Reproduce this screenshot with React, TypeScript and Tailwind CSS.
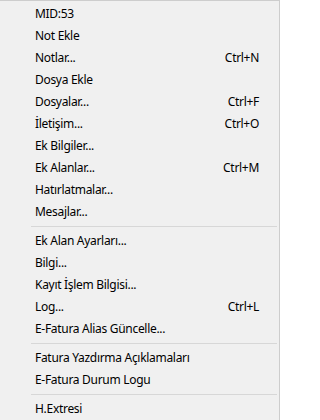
import React from 'react';

type Entry = { label: string; shortcut?: string } | 'sep';

const entries: Entry[] = [
  { label: 'MID:53' },
  { label: 'Not Ekle' },
  { label: 'Notlar...', shortcut: 'Ctrl+N' },
  { label: 'Dosya Ekle' },
  { label: 'Dosyalar...', shortcut: 'Ctrl+F' },
  { label: 'İletişim...', shortcut: 'Ctrl+O' },
  { label: 'Ek Bilgiler...' },
  { label: 'Ek Alanlar...', shortcut: 'Ctrl+M' },
  { label: 'Hatırlatmalar...' },
  { label: 'Mesajlar...' },
  'sep',
  { label: 'Ek Alan Ayarları...' },
  { label: 'Bilgi...' },
  { label: 'Kayıt İşlem Bilgisi...' },
  { label: 'Log...', shortcut: 'Ctrl+L' },
  { label: 'E-Fatura Alias Güncelle...' },
  'sep',
  { label: 'Fatura Yazdırma Açıklamaları' },
  { label: 'E-Fatura Durum Logu' },
  'sep',
  { label: 'H.Extresi' },
];

export default function App() {
  return (
    <div
      className="w-[280px] h-[420px] overflow-hidden bg-[#f0f0f0] border-t border-r border-[#cdcdcd] pt-[2px] text-[12px] tracking-[-0.3px] text-black"
      style={{ fontFamily: '"Noto Sans", "Segoe UI", sans-serif' }}
    >
      {entries.map((e, i) =>
        e === 'sep' ? (
          <div key={i} className="h-[7px] flex items-start pt-[3px]">
            <div className="ml-[31px] mr-[2px] flex-1 h-px bg-[#d7d7d7]" />
          </div>
        ) : (
          <div key={i} className="h-[22px] leading-[22px] flex items-center justify-between pl-[35px] pr-[20px]">
            <span>{e.label}</span>
            {e.shortcut && <span>{e.shortcut}</span>}
          </div>
        )
      )}
    </div>
  );
}
